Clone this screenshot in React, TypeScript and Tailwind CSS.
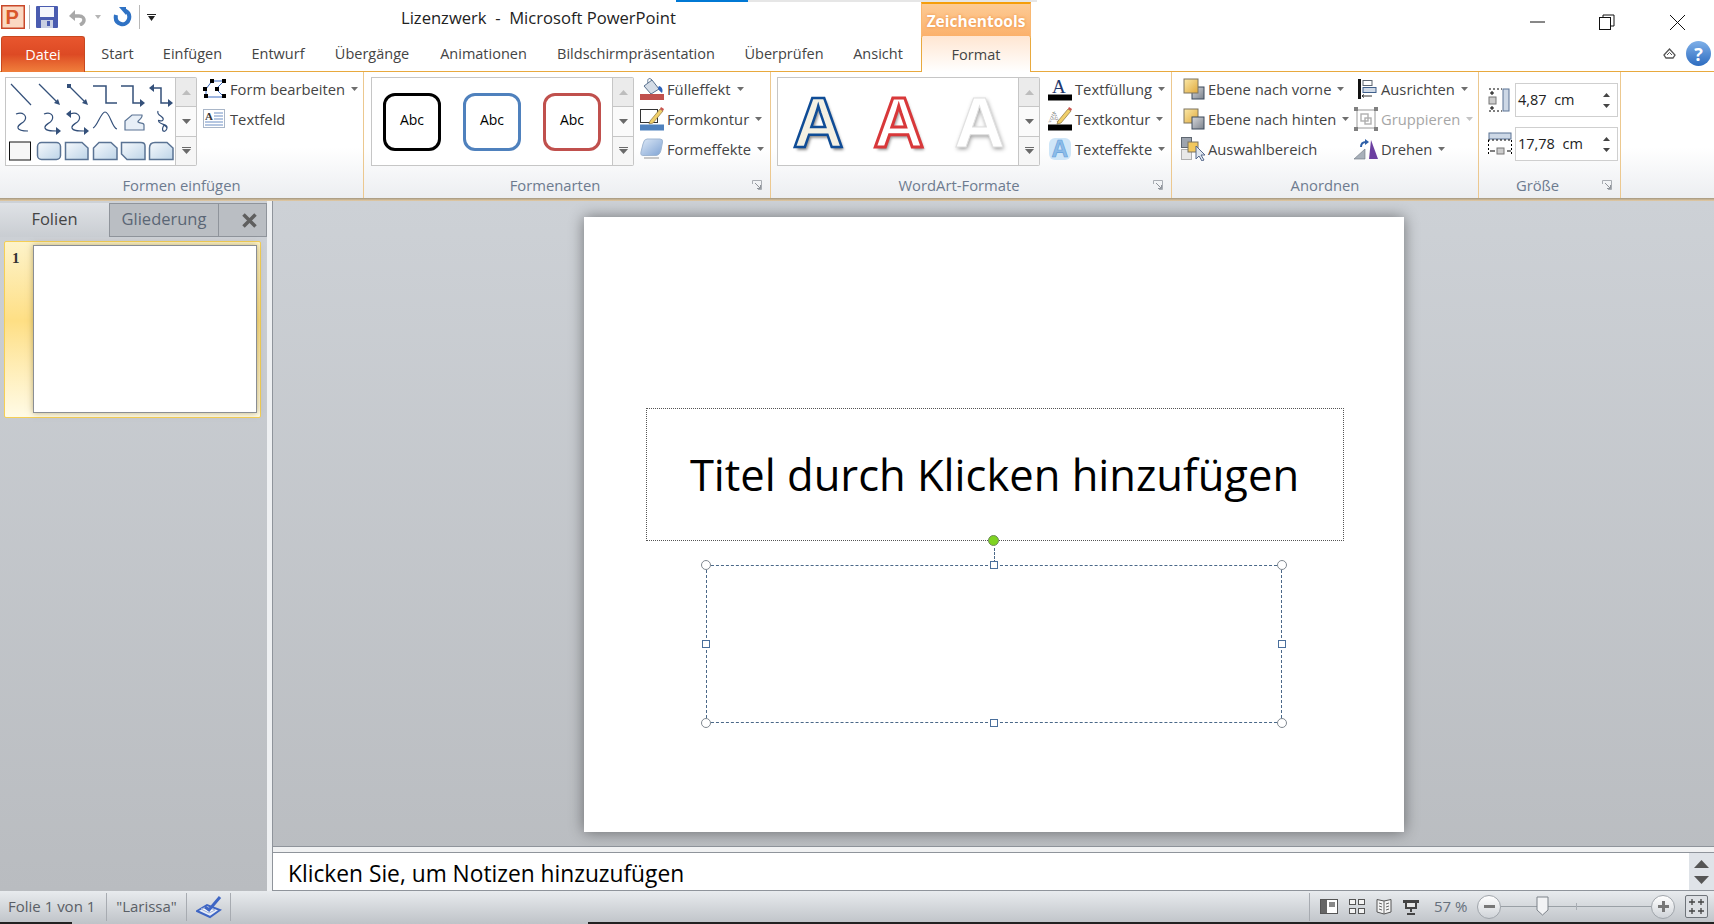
import React from "react";

const Caret = ({ gray = false }: { gray?: boolean }) => (
  <svg width="7" height="4" viewBox="0 0 7 4" className="shrink-0">
    <polygon points="0,0 7,0 3.5,4" fill={gray ? "#c4c4c4" : "#6e6e6e"} />
  </svg>
);

const Launcher = () => (
  <svg width="10" height="10" viewBox="0 0 10 10" className="shrink-0">
    <path d="M.5 4V.5H9.5V9.5H6" fill="none" stroke="#a9adb3" />
    <path d="M3 3L8.5 8.5M8.5 5V8.5H5" fill="none" stroke="#8f949b" />
  </svg>
);

const ShapeGallery = () => (
  <svg width="170" height="87" viewBox="5 78 170 87" className="block">
    <defs>
      <linearGradient id="shapeFill" x1="0" y1="0" x2="1" y2="1">
        <stop offset="0" stopColor="#f6f9fc" />
        <stop offset="1" stopColor="#bdd4e8" />
      </linearGradient>
    </defs>
    <g fill="none" stroke="#34507a" strokeWidth="1.2">
      <path d="M10 84L30 105" />
      <path d="M38 84L57 103" />
      <path d="M68 86L85 103" />
      <path d="M92 86H105V103H116" strokeWidth="1.5" />
      <path d="M120 86H132V103H140" strokeWidth="1.5" />
      <path d="M152 88H160V103H168" strokeWidth="1.5" />
      <path d="M15 114C22 111 26 116 24 120C22 124 16 124 17 128C18 131 23 131 27 131" />
      <path d="M43 114C50 111 53 116 51 120C49 124 43 124 44 128C45 131 50 131 56 131" />
      <path d="M69 114C76 111 80 116 78 120C76 124 70 124 71 128C72 131 77 131 83 131" />
      <path d="M92 128C96 127 100 112 104 112C109 112 111 128 116 129" />
      <path d="M124 130V121L131 115H141C142 118 136 121 137 122C139 124 143 122 143 125V130Z" fill="#e8eff7" stroke="#5a7394" />
      <path d="M157 111C155 116 164 116 162 120C160 123 156 118 158 122C160 125 167 124 166 128C165 133 160 132 162 127C163 124 165 126 166 128" />
    </g>
    <g fill="#34507a">
      <polygon points="59,105 53,103 57,99" />
      <rect x="66" y="84" width="4" height="4" />
      <polygon points="87,105 81,103 85,99" />
      <polygon points="144,103 139,99 139,107" />
      <polygon points="148,88 153,84 153,92" />
      <polygon points="172,103 167,99 167,107" />
      <polygon points="60,131 55,127 55,135" />
      <polygon points="65,114 70,110 70,118" />
      <polygon points="88,131 83,127 83,135" />
    </g>
    <rect x="8.5" y="142" width="21" height="18" fill="#f6f6f6" stroke="#111" />
    <g fill="url(#shapeFill)" stroke="#5a7394" strokeWidth="1.5">
      <rect x="36.5" y="142.5" width="23" height="17" rx="4" />
      <path d="M64.5 142.5H81L87 148V159.5H64.5Z" />
      <path d="M98 142.5H110L116 148V159.5H92.5V148Z" />
      <path d="M120.5 142.5H140Q144 142.5 144 146V159.5H126L120.5 154Z" />
      <path d="M148.5 148Q148.5 142.5 154 142.5H166L172 148V159.5H148.5Z" />
    </g>
  </svg>
);

const Scroller = ({ h }: { h: string }) => (
  <div className={`w-[21px] ${h} flex flex-col border border-l-0 border-[#c6c6c6] rounded-r-[2px] bg-white`}>
    <div className="flex-1 flex items-center justify-center bg-[#ebebeb] border-b border-[#c6c6c6]">
      <svg width="9" height="5" viewBox="0 0 9 5"><polygon points="0,5 9,5 4.5,0" fill="#bdbdbd" /></svg>
    </div>
    <div className="flex-1 flex items-center justify-center border-b border-[#c6c6c6] bg-[#fafafa]">
      <svg width="9" height="5" viewBox="0 0 9 5"><polygon points="0,0 9,0 4.5,5" fill="#6a6a6a" /></svg>
    </div>
    <div className="flex-1 flex items-center justify-center bg-[#f6f6f6]">
      <svg width="9" height="7" viewBox="0 0 9 7"><path d="M0 .5H9" stroke="#6a6a6a" /><polygon points="0,2 9,2 4.5,7" fill="#6a6a6a" /></svg>
    </div>
  </div>
);

const FormEditIcon = () => (
  <svg width="24" height="20" viewBox="0 0 24 20">
    <path d="M3 10L9 2H21L13 10L21 18H3Z" fill="none" stroke="#3a6bc0" />
    <g fill="#000">
      <rect x="7" y="0" width="4" height="4" /><rect x="19" y="0" width="4" height="4" />
      <rect x="0" y="8" width="4" height="4" /><rect x="12" y="8" width="4" height="4" />
      <rect x="1" y="15" width="4" height="4" /><rect x="19" y="15" width="4" height="4" />
    </g>
  </svg>
);

const TextBoxIcon = () => (
  <svg width="22" height="20" viewBox="0 0 22 20">
    <rect x=".5" y=".5" width="21" height="18" fill="#fff" stroke="#a9b6c8" />
    <text x="2" y="11" fontSize="11" fontFamily="Liberation Serif" fontWeight="700" fill="#333">A</text>
    <path d="M11 4H20M11 7H20M11 10H20M2 13H20M2 16H20" stroke="#6d8fc4" />
  </svg>
);

const BucketIcon = () => (
  <svg width="24" height="24" viewBox="0 0 24 24">
    <path d="M4 9L12 3L19 12L11 17Z" fill="#d4dce6" stroke="#59718e" />
    <path d="M12 3C9 0 7 2 8 6" fill="none" stroke="#59718e" />
    <path d="M19 9C23 10 23 14 22 16C20 14 18 13 18 11Z" fill="#2d62b8" />
    <rect x="0" y="17" width="24" height="6" fill="#c0504d" />
  </svg>
);

const PenOutlineIcon = ({ bar, dotted = false }: { bar: string; dotted?: boolean }) => (
  <svg width="24" height="24" viewBox="0 0 24 24">
    {dotted ? (
      <text x="1" y="15" fontSize="15" fontFamily="Liberation Sans" fill="#fff" stroke="#555" strokeWidth=".6" strokeDasharray="1 1">A</text>
    ) : (
      <rect x=".5" y="2.5" width="17" height="13" fill="#fff" stroke="#333" />
    )}
    <path d="M10 14L20 2L23 4L13 16L9 17Z" fill="#f0cf6a" stroke="#8b7440" strokeWidth=".7" />
    <path d="M20 2L23 4L24 2L21 0Z" fill="#c9544e" />
    <rect x="0" y="17.5" width="24" height="6" fill={bar} />
  </svg>
);

const EffectsIcon = () => (
  <svg width="24" height="22" viewBox="0 0 24 22">
    <defs>
      <linearGradient id="fxBox" x1="0" y1="0" x2="1" y2="1">
        <stop offset="0" stopColor="#dce8f6" />
        <stop offset="1" stopColor="#7fa3d4" />
      </linearGradient>
    </defs>
    <path d="M7 1H20Q23 1 22.5 4L21 12Q20 17 16 17.5H4Q0 18 1 14L3 6Q4 1 7 1Z" fill="url(#fxBox)" stroke="#9fb6d2" />
    <path d="M4 20H19" stroke="#c8c8c8" strokeWidth="2" />
  </svg>
);

const TextFillIcon = () => (
  <svg width="24" height="24" viewBox="0 0 24 24">
    <text x="4" y="16" fontSize="19" fontFamily="Liberation Serif" fill="#1f3a6e">A</text>
    <rect x="0" y="17.5" width="24" height="6" fill="#000" />
  </svg>
);

const TextFxIcon = () => (
  <svg width="24" height="24" viewBox="0 0 24 24">
    <rect x="1" y="1" width="22" height="22" rx="6" fill="#cfe6f8" />
    <text x="3.5" y="20" fontSize="23" fontWeight="700" fontFamily="Liberation Sans" fill="#8dbce8" stroke="#5f9fdc" strokeWidth=".6">A</text>
  </svg>
);

const LayerIcon = ({ front }: { front: boolean }) => (
  <svg width="22" height="22" viewBox="0 0 22 22">
    <defs>
      <linearGradient id={front ? "yelF" : "yelB"} x1="0" y1="0" x2="1" y2="1">
        <stop offset="0" stopColor="#fbe9a8" />
        <stop offset="1" stopColor="#e0a93c" />
      </linearGradient>
      <linearGradient id={front ? "grF" : "grB"} x1="0" y1="0" x2="1" y2="1">
        <stop offset="0" stopColor="#d6d8dc" />
        <stop offset="1" stopColor="#7d838c" />
      </linearGradient>
    </defs>
    {front ? (
      <>
        <rect x="9" y="9" width="12" height="12" fill="url(#grF)" stroke="#3c4a5c" />
        <rect x="1" y="1" width="14" height="14" fill="url(#yelF)" stroke="#7d7460" />
      </>
    ) : (
      <>
        <rect x="1" y="1" width="14" height="14" fill="url(#yelB)" stroke="#7d7460" />
        <rect x="9" y="9" width="12" height="12" fill="url(#grB)" stroke="#3c4a5c" />
      </>
    )}
  </svg>
);

const SelectionIcon = () => (
  <svg width="24" height="24" viewBox="0 0 24 24">
    <rect x=".5" y=".5" width="10" height="10" fill="#9da4ae" stroke="#5e6670" />
    <rect x=".5" y="12.5" width="10" height="10" fill="#e8e8e8" stroke="#b0b0b0" />
    <rect x="7" y="5" width="10" height="10" fill="#f2c85e" stroke="#7d7460" />
    <path d="M15 9V22L18 19L21 24L23 23L20 18H24Z" fill="#dfe6ef" stroke="#56688a" />
  </svg>
);

const AlignIcon = () => (
  <svg width="20" height="20" viewBox="0 0 20 20">
    <rect x="0" y="0" width="3" height="20" fill="#111" />
    <rect x="5" y="1.5" width="9" height="5" fill="#fff" stroke="#5e6670" />
    <rect x="5" y="8.5" width="13" height="5" fill="#cfd9e6" stroke="#40608c" />
    <path d="M4 17H14M6 15.5L4 17L6 18.5" fill="none" stroke="#333" />
  </svg>
);

const GroupIcon = () => (
  <svg width="24" height="24" viewBox="0 0 24 24">
    <rect x="3" y="3" width="18" height="18" fill="none" stroke="#9a9a9a" />
    <rect x="7" y="7" width="7" height="7" fill="none" stroke="#b0b0b0" strokeWidth="1.4" />
    <rect x="11" y="11" width="6" height="6" fill="none" stroke="#b0b0b0" strokeWidth="1.4" />
    <g fill="#808080">
      <rect x="0" y="0" width="4" height="4" /><rect x="20" y="0" width="4" height="4" />
      <rect x="0" y="20" width="4" height="4" /><rect x="20" y="20" width="4" height="4" />
    </g>
  </svg>
);

const RotateIcon = () => (
  <svg width="24" height="22" viewBox="0 0 24 22">
    <polygon points="0,21 11,11 11,21" fill="#a8b0ba" stroke="#6d7580" strokeWidth=".6" />
    <polygon points="15,21 17,2 24,21" fill="#6b3fa0" />
    <path d="M7 9C7 5 9 4 12 4" fill="none" stroke="#2d5fa8" strokeWidth="2" />
    <polygon points="11,1 15,4 11,7" fill="#2d5fa8" />
  </svg>
);

const HeightIcon = () => (
  <svg width="22" height="24" viewBox="0 0 22 24">
    <rect x="15" y="1" width="6" height="22" fill="#cdd8e6" stroke="#5a7394" />
    <rect x="1" y="9" width="7" height="7" fill="#ccc" stroke="#777" />
    <path d="M1 1H14M1 23H14" stroke="#000" strokeDasharray="2 2" />
    <path d="M4 3V7M2 5H6M4 18V22M2 20H6" stroke="#000" />
  </svg>
);

const WidthIcon = () => (
  <svg width="24" height="24" viewBox="0 0 24 24">
    <rect x="1" y="1" width="22" height="6" fill="#cdd8e6" stroke="#5a7394" />
    <rect x="9" y="16" width="7" height="6" fill="#ccc" stroke="#777" />
    <path d="M.5 8V23M23.5 8V23M0 8H24" stroke="#000" strokeDasharray="2 2" />
    <path d="M2 19H7M19 19H23" stroke="#000" />
  </svg>
);

type RowProps = { icon: React.ReactNode; label: string; caret?: boolean; disabled?: boolean; gap?: string };

const Row = ({ icon, label, caret = true, disabled = false, gap = "gap-[3px]" }: RowProps) => (
  <div className={`h-[30px] flex items-center ${gap} whitespace-nowrap text-[14.75px] ${disabled ? "text-[#a6a6a6]" : "text-[#444]"}`}>
    <span className="flex items-center justify-center shrink-0">{icon}</span>
    <span>{label}</span>
    {caret && <span className="ml-[3px] flex"><Caret gray={disabled} /></span>}
  </div>
);

const Group = ({ width, label, launcher = false, children }: { width: string; label: string; launcher?: boolean; children: React.ReactNode }) => (
  <div className={`${width} shrink-0 flex flex-col border-r border-[#ecc88f]`}>
    <div className="h-[102px] flex pt-[5px]">{children}</div>
    <div className="flex-1 flex items-center text-[#6d7b8f] text-[14.8px] pb-[2px]">
      <span className="flex-1 text-center">{label}</span>
      {launcher && (
        <span className="w-[24px] flex pl-[6px]"><Launcher /></span>
      )}
    </div>
  </div>
);

const AbcBox = ({ color }: { color: string }) => (
  <div className={`w-[58px] h-[58px] rounded-[12px] border-[3px] ${color} flex items-center justify-center text-[14px] text-black pb-[4px]`}>Abc</div>
);

const SizeField = ({ value }: { value: string }) => (
  <div className="w-[103px] h-[34px] bg-white border border-[#cfcfcf] flex items-center pl-[2px] text-[14.5px] text-[#222]">
    <span className="flex-1 whitespace-pre">{value}</span>
    <span className="w-[22px] flex flex-col items-center gap-[7px]">
      <svg width="7" height="4" viewBox="0 0 7 4"><polygon points="0,4 7,4 3.5,0" fill="#444" /></svg>
      <svg width="7" height="4" viewBox="0 0 7 4"><polygon points="0,0 7,0 3.5,4" fill="#444" /></svg>
    </span>
  </div>
);

const Handle = ({ round = false }: { round?: boolean }) => (
  <span className={round ? "block w-[10px] h-[10px] rounded-full bg-white border border-[#808890]" : "block w-[8px] h-[8px] bg-white border border-[#4a6f9c]"} />
);

const tabs = [
  { label: "Start", w: "w-[61px]" },
  { label: "Einfügen", w: "w-[89px]" },
  { label: "Entwurf", w: "w-[82px]" },
  { label: "Übergänge", w: "w-[106px]" },
  { label: "Animationen", w: "w-[117px]" },
  { label: "Bildschirmpräsentation", w: "w-[188px]" },
  { label: "Überprüfen", w: "w-[108px]" },
  { label: "Ansicht", w: "w-[80px]" },
];

export default function App() {
  return (
    <div className="w-[1714px] h-[924px] overflow-hidden flex flex-col bg-white font-['Open_Sans','Noto_Sans',sans-serif] text-[14.5px] text-[#444]">
      {/* thin task strip above the title bar */}
      <div className="h-[2px] flex pl-[676px]">
        <div className="w-[72px] bg-[#0078d4]" />
        <div className="w-[289px] bg-[#e6e6e6]" />
      </div>

      {/* title bar */}
      <div className="h-[34px] flex items-start">
        <div className="w-[401px] h-full flex items-center pl-[1px] pb-[4px]">
          <svg width="24" height="24" viewBox="0 0 24 24">
            <rect x=".75" y=".75" width="22.5" height="22.5" fill="#fbd9c2" stroke="#c9482a" strokeWidth="1.5" />
            <text x="4.5" y="19" fontSize="20" fontWeight="700" fontFamily="Liberation Sans" fill="#d9562b">P</text>
          </svg>
          <span className="ml-[4px] w-px h-[24px] bg-[#b8b8b8]" />
          <svg className="ml-[6px]" width="22" height="22" viewBox="0 0 22 22">
            <rect x="0" y="0" width="22" height="22" rx="1" fill="#4a5cb0" />
            <rect x="4" y="1" width="14" height="10" fill="#f4f6fb" />
            <rect x="5" y="14" width="12" height="8" fill="#c9cfe2" />
            <rect x="11" y="15" width="3" height="5" fill="#4a5cb0" />
          </svg>
          <svg className="ml-[11px]" width="17" height="17" viewBox="0 0 17 17">
            <path d="M3 7H10C14 7 15 10 15 11C15 13 13 15 11 16" fill="none" stroke="#a8a8a8" strokeWidth="3.5" />
            <polygon points="0,7 6,1 6,12" fill="#a8a8a8" />
          </svg>
          <svg className="ml-[9px]" width="6" height="4" viewBox="0 0 6 4"><polygon points="0,0 6,0 3,4" fill="#b5b5b5" /></svg>
          <svg className="ml-[12px]" width="19" height="20" viewBox="0 0 19 20">
            <path d="M12 3.5C15 5 17 8 16 12C15 16 11 18 8 17C4 16 2 13 3 8" fill="none" stroke="#2f72c4" strokeWidth="4" />
            <polygon points="6,0 13,0 13,8" fill="#2f72c4" />
          </svg>
          <span className="ml-[7px] w-px h-[24px] bg-[#b8b8b8]" />
          <svg className="ml-[7px]" width="9" height="7" viewBox="0 0 9 7"><path d="M0 .5H9" stroke="#222" /><polygon points="1,2 8,2 4.5,7" fill="#222" /></svg>
        </div>
        <div className="w-[520px] h-full flex items-center text-[16.6px] text-[#222] whitespace-pre leading-none pb-[1px]">Lizenzwerk  -  Microsoft PowerPoint</div>
        <div className="w-[110px] h-[35px] pt-[2px] bg-gradient-to-b from-[#fdcb95] to-[#fbb06a] border-t-2 border-x border-t-[#f59e0b] border-x-[#f9b872] flex items-center justify-center text-[15.5px] font-bold text-white [text-shadow:0_0_3px_#e98a3c] whitespace-nowrap">Zeichentools</div>
        <div className="flex-1 h-full flex items-start justify-end">
          <div className="w-[70px] h-[34px] pt-[6px] flex items-center justify-center">
            <svg width="15" height="2" viewBox="0 0 15 2"><path d="M0 1H15" stroke="#111" /></svg>
          </div>
          <div className="w-[70px] h-[34px] pt-[6px] flex items-center justify-center">
            <svg width="16" height="16" viewBox="0 0 16 16"><path d="M4 3V1H15V12H12" fill="none" stroke="#111" /><rect x=".5" y="3.5" width="11" height="12" fill="none" stroke="#111" /></svg>
          </div>
          <div className="w-[70px] h-[34px] pt-[6px] flex items-center justify-center mr-[2px]">
            <svg width="15" height="15" viewBox="0 0 15 15"><path d="M0 0L15 15M15 0L0 15" stroke="#111" /></svg>
          </div>
        </div>
      </div>

      {/* tabs */}
      <div className="h-[36px] flex border-b border-[#e8a93e]">
        <div className="w-[84px] ml-px h-[36px] rounded-t-[3px] bg-gradient-to-b from-[#e8562e] via-[#dd4a24] to-[#f07f3c] border border-b-0 border-[#c8481f] flex items-center justify-center text-white">Datei</div>
        <div className="flex pl-[2px] pt-[1px]">
          {tabs.map((t) => (
            <div key={t.label} className={`${t.w} flex items-center justify-center whitespace-nowrap`}>{t.label}</div>
          ))}
        </div>
        <div className="w-[110px] ml-[3px] h-[36px] pt-[1px] bg-gradient-to-b from-[#ffe6d2] to-white border-x border-[#e8a93e] flex items-center justify-center rounded-t-[2px]">Format</div>
        <div className="flex-1 flex items-center justify-end pr-[3px] gap-[10px]">
          <svg width="13" height="11" viewBox="0 0 13 11"><path d="M1 7L6.5 1L12 7L10 10H3Z" fill="none" stroke="#555" strokeWidth="1.3" /><path d="M4 7L6.5 4.5L9 7" fill="none" stroke="#555" /></svg>
          <div className="w-[25px] h-[25px] rounded-full bg-gradient-to-b from-[#7fb0e8] to-[#2c6cc0] flex items-center justify-center text-white font-bold text-[18px] leading-none">?</div>
        </div>
      </div>

      {/* ribbon */}
      <div className="h-[126px] flex bg-gradient-to-b from-white via-white via-[60%] to-[#eceef1]">
        <Group width="w-[364px]" label="Formen einfügen">
          <div className="flex ml-[5px] h-[89px]">
            <div className="w-[171px] border border-[#c6c6c6] bg-white overflow-hidden"><ShapeGallery /></div>
            <Scroller h="h-[89px]" />
          </div>
          <div className="ml-[6px] flex flex-col -mt-[3px]">
            <Row icon={<FormEditIcon />} label="Form bearbeiten" />
            <Row icon={<TextBoxIcon />} label="Textfeld" caret={false} gap="gap-[5px]" />
          </div>
        </Group>

        <Group width="w-[407px]" label="Formenarten" launcher>
          <div className="flex ml-[7px] h-[89px]">
            <div className="w-[242px] border border-[#c6c6c6] bg-white flex items-center pl-[11px] gap-[22px]">
              <AbcBox color="border-black" />
              <AbcBox color="border-[#4f81bd]" />
              <AbcBox color="border-[#c0504d]" />
            </div>
            <Scroller h="h-[89px]" />
          </div>
          <div className="ml-[6px] flex flex-col -mt-[3px]">
            <Row icon={<BucketIcon />} label="Fülleffekt" />
            <Row icon={<PenOutlineIcon bar="#4f81bd" />} label="Formkontur" />
            <Row icon={<EffectsIcon />} label="Formeffekte" />
          </div>
        </Group>

        <Group width="w-[401px]" label="WordArt-Formate" launcher>
          <div className="flex ml-[6px] h-[89px]">
            <div className="w-[242px] border border-[#c6c6c6] bg-white flex items-center pl-[15px] gap-[30px] font-['Liberation_Sans',sans-serif] font-bold text-[70px] leading-none pt-[3px]">
              <span className="text-[#f3f0e3] [-webkit-text-stroke:2.5px_#0f4c96] [text-shadow:2px_3px_3px_#888]">A</span>
              <span className="text-white [-webkit-text-stroke:3px_#d8383a] [text-shadow:2px_3px_3px_#999]">A</span>
              <span className="text-white [-webkit-text-stroke:1px_#e0e0e0] [text-shadow:1px_2px_4px_#999]">A</span>
            </div>
            <Scroller h="h-[89px]" />
          </div>
          <div className="ml-[8px] flex flex-col -mt-[3px]">
            <Row icon={<TextFillIcon />} label="Textfüllung" />
            <Row icon={<PenOutlineIcon bar="#000" dotted />} label="Textkontur" />
            <Row icon={<TextFxIcon />} label="Texteffekte" />
          </div>
        </Group>

        <Group width="w-[307px]" label="Anordnen">
          <div className="flex -mt-[3px] pl-[11px]">
            <div className="w-[171px] flex flex-col">
              <Row icon={<LayerIcon front />} label="Ebene nach vorne" gap="gap-[3px]" />
              <Row icon={<LayerIcon front={false} />} label="Ebene nach hinten" gap="gap-[3px]" />
              <div className="-ml-[2px]"><Row icon={<SelectionIcon />} label="Auswahlbereich" caret={false} gap="gap-[3px]" /></div>
            </div>
            <div className="flex flex-col">
              <div className="pl-[4px]"><Row icon={<AlignIcon />} label="Ausrichten" gap="gap-[3px]" /></div>
              <Row icon={<GroupIcon />} label="Gruppieren" disabled gap="gap-[3px]" />
              <Row icon={<RotateIcon />} label="Drehen" gap="gap-[3px]" />
            </div>
          </div>
        </Group>

        <Group width="w-[142px]" label="Größe" launcher>
          <div className="flex flex-col pl-[9px] pt-[6px] gap-[10px]">
            <div className="flex items-center gap-[5px]"><HeightIcon /><SizeField value="4,87  cm" /></div>
            <div className="flex items-center gap-[3px]"><WidthIcon /><SizeField value="17,78  cm" /></div>
          </div>
        </Group>
        <div className="flex-1" />
      </div>
      <div className="h-[3px] bg-gradient-to-b from-[#a39780] to-[#e6cda6]" />

      {/* main area */}
      <div className="flex-1 min-h-0 flex bg-gradient-to-b from-[#cdd1d6] to-[#b9bcc0]">
        <div className="w-[267px] shrink-0 flex flex-col">
          <div className="h-[34px] mt-[2px] flex text-[16.5px] border-r border-[#8f949b]">
            <div className="w-[109px] pb-[1px] flex items-center justify-center bg-gradient-to-b from-[#dfe2e6] to-[#c9cdd2] text-[#444]">Folien</div>
            <div className="w-[110px] pb-[1px] flex items-center justify-center bg-[#babec3] border border-[#8f949b] text-[#5a6675]">Gliederung</div>
            <div className="flex-1 flex items-center justify-center pl-[14px] bg-[#babec3] border-y border-[#8f949b]">
              <svg width="15" height="15" viewBox="0 0 15 15"><path d="M1.5 1.5L13.5 13.5M13.5 1.5L1.5 13.5" stroke="#5f5f5f" strokeWidth="3.5" /></svg>
            </div>
          </div>
          <div className="ml-[4px] mt-[4px] w-[257px] h-[177px] rounded-[2px] border border-[#f5cf55] bg-gradient-to-b from-[#fdf3c9] via-[#fedf84] via-[45%] to-[#fffbe6] flex pt-[3px]">
            <span className="w-[28px] pl-[7px] pt-[2px] text-[15px] font-bold font-['Liberation_Serif',serif] text-[#333]">1</span>
            <div className="w-[224px] h-[168px] bg-white border border-[#8a8e94] shadow-[0_0_6px_rgba(120,100,40,.5)]" />
          </div>
        </div>

        <div className="w-[6px] shrink-0 bg-[#eef0f2] border-r border-[#8f949b]" />

        <div className="flex-1 flex flex-col min-w-0">
          <div className="flex-1 min-h-0 flex justify-center pt-[16px] border-b border-[#8f949b]">
            <div className="w-[820px] h-[615px] bg-white shadow-[0_0_14px_rgba(0,0,0,.45)] flex flex-col pl-[62px] pt-[191px]">
              <div className="relative w-[698px] h-[133px] border border-dotted border-[#555] flex items-center justify-center text-[43.5px] text-black whitespace-nowrap leading-none">
                Titel durch Klicken hinzufügen
                <span className="absolute left-[341px] -bottom-[6px]">
                  <span className="block w-[11px] h-[11px] rounded-full bg-[#7ed321] border border-[#6d8a5a]" />
                </span>
              </div>
              <div className="relative ml-[60px] mt-[24px] w-[576px] h-[158px] border border-dashed border-[#4a6888]">
                <span className="absolute left-[287px] -top-[18px] h-[15px] border-l border-dashed border-[#4a6888]" />
                <span className="absolute -left-[6px] -top-[6px]"><Handle round /></span>
                <span className="absolute left-[283px] -top-[5px]"><Handle /></span>
                <span className="absolute -right-[6px] -top-[6px]"><Handle round /></span>
                <span className="absolute -left-[5px] top-[74px]"><Handle /></span>
                <span className="absolute -right-[5px] top-[74px]"><Handle /></span>
                <span className="absolute -left-[6px] -bottom-[6px]"><Handle round /></span>
                <span className="absolute left-[283px] -bottom-[5px]"><Handle /></span>
                <span className="absolute -right-[6px] -bottom-[6px]"><Handle round /></span>
              </div>
            </div>
          </div>
          <div className="h-[6px] bg-[#f0f1f2] border-b border-[#8f949b]" />
          <div className="h-[38px] flex bg-white border-b border-[#8f949b]">
            <div className="flex-1 pl-[15px] pt-[6px] flex items-center text-[22.75px] text-black whitespace-nowrap leading-none">Klicken Sie, um Notizen hinzuzufügen</div>
            <div className="w-[25px] bg-[#dfe3e8] flex flex-col items-center justify-center gap-[8px]">
              <svg width="15" height="8" viewBox="0 0 15 8"><polygon points="0,8 15,8 7.5,0" fill="#555" /></svg>
              <svg width="15" height="8" viewBox="0 0 15 8"><polygon points="0,0 15,0 7.5,8" fill="#555" /></svg>
            </div>
          </div>
        </div>
      </div>

      {/* status bar */}
      <div className="h-[33px] flex flex-col bg-gradient-to-b from-[#e8ebee] to-[#bfc3c8] text-[15px] text-[#5a5f66]">
        <div className="flex-1 flex items-center justify-between">
          <div className="flex items-stretch h-[28px]">
            <div className="w-[107px] pl-[8px] flex items-center border-r border-[#a7abb1] whitespace-nowrap">Folie 1 von 1</div>
            <div className="w-[80px] flex items-center justify-center border-r border-[#a7abb1]">"Larissa"</div>
            <div className="w-[44px] flex items-center justify-center border-r border-[#a7abb1]">
              <svg width="26" height="24" viewBox="0 0 26 24">
                <path d="M1 16L11 10L24 15L14 22Z" fill="#e9edf7" stroke="#3f66c4" strokeWidth="2" />
                <path d="M5 14L11 12L19 15L13 18Z" fill="#fff" stroke="#9fb0d8" />
                <path d="M9 12L13 15L24 2" fill="none" stroke="#3f66c4" strokeWidth="3" />
              </svg>
            </div>
          </div>
          <div className="flex items-center h-[28px]">
            <div className="h-full border-l border-[#a7abb1] pl-[10px] flex items-center gap-[11px]">
              <svg width="18" height="15" viewBox="0 0 18 15"><rect x=".5" y=".5" width="17" height="14" fill="#fff" stroke="#555" /><rect x="1" y="1" width="6" height="13" fill="#666" /><rect x="9" y="3" width="6" height="5" fill="#888" /></svg>
              <svg width="16" height="15" viewBox="0 0 16 15"><g fill="#f4f4f4" stroke="#555"><rect x=".5" y=".5" width="6" height="5" /><rect x="9.5" y=".5" width="6" height="5" /><rect x=".5" y="9.5" width="6" height="5" /><rect x="9.5" y="9.5" width="6" height="5" /></g></svg>
              <svg width="16" height="16" viewBox="0 0 16 16"><path d="M8 2L1 .5V13L8 15L15 13V.5Z" fill="#f4f4f4" stroke="#555" /><path d="M8 2V15M3 4L6 5M3 7L6 8M3 10L6 11M10 5L13 4M10 8L13 7M10 11L13 10" stroke="#666" /></svg>
              <svg width="16" height="16" viewBox="0 0 16 16"><path d="M0 1H16V4H14V10H2V4H0Z" fill="#444" /><rect x="4" y="4" width="8" height="4" fill="#e8e8e8" /><path d="M8 10V13M4 15H12" stroke="#444" strokeWidth="2" /></svg>
            </div>
            <span className="ml-[15px] w-[43px] whitespace-nowrap text-[#66707c]">57 %</span>
            <div className="w-[24px] h-[24px] rounded-full bg-gradient-to-b from-white to-[#cfd3d8] border border-[#a0a5ab] flex items-center justify-center">
              <span className="block w-[11px] h-[3px] bg-[#777]" />
            </div>
            <div className="w-[150px] h-px bg-[#9aa0a6] relative">
              <svg className="absolute left-[35px] -top-[10px]" width="13" height="20" viewBox="0 0 13 20"><path d="M1 1H12V14L6.5 19L1 14Z" fill="#f2f3f5" stroke="#7d838a" /></svg>
              <span className="absolute left-[75px] -top-[3px] w-px h-[7px] bg-[#a9aeb4]" />
            </div>
            <div className="w-[24px] h-[24px] rounded-full bg-gradient-to-b from-white to-[#cfd3d8] border border-[#a0a5ab] flex items-center justify-center relative">
              <span className="block w-[11px] h-[3px] bg-[#777]" />
              <span className="absolute block w-[3px] h-[11px] bg-[#777]" />
            </div>
            <div className="ml-[10px] mr-[6px] w-[23px] h-[23px] rounded-[2px] bg-[#dde0e4] border border-[#6f747a] flex items-center justify-center">
              <svg width="19" height="19" viewBox="0 0 19 19"><path d="M5 2V8M2 5H8M14 2V8M11 5H17M5 11V17M2 14H8M14 11V17M11 14H17" stroke="#444" strokeWidth="1.3" /></svg>
            </div>
          </div>
        </div>
        <div className="h-[2px] flex">
          <div className="w-[72px] bg-[#222]" />
          <div className="w-[516px]" />
          <div className="flex-1 bg-[#222]" />
        </div>
      </div>
    </div>
  );
}
